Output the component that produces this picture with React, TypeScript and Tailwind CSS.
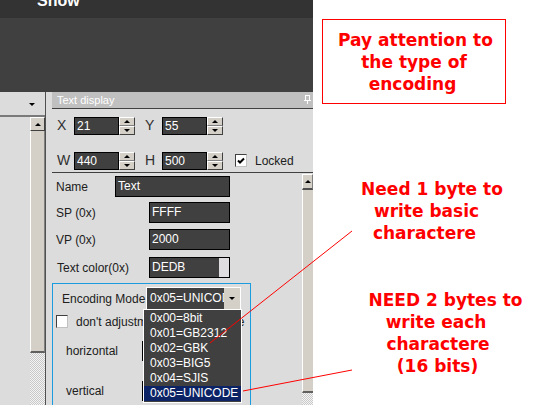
import React from 'react';

function Tri({ up }: { up?: boolean }) {
    return up ? (
        <div className="w-0 h-0 border-x-[3px] border-x-transparent border-b-[3px] border-b-black" />
    ) : (
        <div className="w-0 h-0 border-x-[3px] border-x-transparent border-t-[3px] border-t-black" />
    );
}

function Spin() {
    return (
        <div className="flex flex-col w-[16px] h-[18px] shrink-0">
            <div className="h-[9px] flex items-center justify-center bg-[#d4d0c8] border border-t-white border-l-white border-r-[#404040] border-b-[#808080]">
                <Tri up />
            </div>
            <div className="h-[9px] flex items-center justify-center bg-[#d4d0c8] border border-t-white border-l-white border-r-[#404040] border-b-[#404040]">
                <Tri />
            </div>
        </div>
    );
}

function NumField({ label, value }: { label: string; value: string }) {
    return (
        <div className="flex items-center">
            <span className="w-[17px] text-[14px] text-[#303030]">{label}</span>
            <div className="w-[45px] h-[18px] bg-[#404040] border border-black text-white text-[12px] leading-[16px] pl-[2px]">
                {value}
            </div>
            <Spin />
        </div>
    );
}

function Field({ label, value, labelW, inputW, swatch }: { label: string; value: string; labelW: string; inputW: string; swatch?: boolean }) {
    return (
        <div className="flex items-center h-[21px]">
            <span className={`${labelW} text-[12px] text-[#202020]`}>{label}</span>
            <div className={`${inputW} h-[21px] bg-[#404040] border border-black flex`}>
                <span className="flex-1 text-white text-[12px] leading-[19px] pl-[2px]">{value}</span>
                {swatch && <span className="w-[10px] bg-[#e0dde0]" />}
            </div>
        </div>
    );
}

const encodings = ['0x00=8bit', '0x01=GB2312', '0x02=GBK', '0x03=BIG5', '0x04=SJIS', '0x05=UNICODE'];

export default function App() {
    return (
        <div className="relative w-[536px] h-[405px] overflow-hidden bg-white flex font-['Liberation_Sans',Arial,sans-serif]">
            {/* App window */}
            <div className="w-[313px] h-full flex flex-col shrink-0">
                <div className="h-[18px] bg-[#333333] overflow-hidden pl-[37px]">
                    <div className="-mt-[7px] text-white font-bold text-[16px] leading-[16px]">Show</div>
                </div>
                <div className="h-[74px] bg-[#404040]" />

                <div className="flex-1 flex bg-[#dcdcdc] min-h-0">
                    {/* Left panel */}
                    <div className="w-[46px] flex flex-col border-r border-[#505050]">
                        <div className="h-[23px] flex items-center justify-end pr-[10px] pt-[2px]">
                            <Tri />
                        </div>
                        <div className="flex-1 flex border-t-2 border-[#7a7a7a] min-h-0">
                            <div className="flex-1" />
                            <div className="w-[15px] flex flex-col">
                                <div className="h-[14px] flex items-center justify-center bg-[#d4d0c8] border border-t-white border-l-white border-r-[#404040] border-b-[#404040]">
                                    <Tri up />
                                </div>
                                <div className="h-[222px] bg-[#d4d0c8] border-l border-l-white border-r border-r-[#808080] border-b-2 border-b-[#606060]" />
                                <div className="flex-1 bg-[repeating-conic-gradient(#c8c8c8_0_25%,#f4f4f4_0_50%)] bg-[length:2px_2px]" />
                            </div>
                        </div>
                    </div>
                    <div className="w-[6px]" />

                    {/* Text display panel */}
                    <div className="flex-1 flex flex-col min-w-0">
                        <div className="h-[17px] bg-[#c0c0c0] border-b border-[#404040] flex items-center justify-between pl-[5px] pr-[2px]">
                            <span className="text-white text-[11px]">Text display</span>
                            <svg width="7" height="9" viewBox="0 0 7 9" className="mb-[1px]">
                                <rect x="1.5" y="0.5" width="4" height="5" fill="none" stroke="white" />
                                <line x1="0" y1="5.5" x2="7" y2="5.5" stroke="white" />
                                <line x1="3.5" y1="6" x2="3.5" y2="9" stroke="white" />
                            </svg>
                        </div>

                        <div className="pl-[5px] pt-[6px] pb-[1px] border-b border-[#404040] flex flex-col gap-[14px]">
                            <div className="flex items-center gap-[10px]">
                                <NumField label="X" value="21" />
                                <NumField label="Y" value="55" />
                            </div>
                            <div className="flex items-center">
                                <NumField label="W" value="440" />
                                <div className="w-[10px]" />
                                <NumField label="H" value="500" />
                                <div className="ml-[12px] w-[12px] h-[13px] bg-white border border-t-[#404040] border-l-[#404040] border-r-[#c0c0c0] border-b-[#c0c0c0] flex items-center justify-center">
                                    <svg width="8" height="8" viewBox="0 0 8 8">
                                        <path d="M1 3.5 L3 5.5 L7 1.5" fill="none" stroke="black" strokeWidth="2" />
                                    </svg>
                                </div>
                                <span className="ml-[8px] text-[12px] text-[#202020]">Locked</span>
                            </div>
                        </div>

                        <div className="flex-1 flex min-h-0">
                            <div className="flex-1 flex flex-col">
                                <div className="pl-[4px] mt-[3px]">
                                    <Field label="Name" value="Text" labelW="w-[59px]" inputW="w-[115px]" />
                                </div>
                                <div className="pl-[4px] mt-[5px]">
                                    <Field label="SP (0x)" value="FFFF" labelW="w-[93px]" inputW="w-[81px]" />
                                </div>
                                <div className="pl-[4px] mt-[6px]">
                                    <Field label="VP (0x)" value="2000" labelW="w-[93px]" inputW="w-[81px]" />
                                </div>
                                <div className="pl-[5px] mt-[7px]">
                                    <Field label="Text color(0x)" value="DEDB" labelW="w-[92px]" inputW="w-[81px]" swatch />
                                </div>

                                {/* Encoding group */}
                                <div className="mt-[5px] w-[199px] flex-1 border-t border-x border-[#1c9ce0] flex flex-col">
                                    <div className="flex items-center pl-[9px] pt-[3px]">
                                        <span className="w-[84px] text-[12px] text-[#202020] whitespace-nowrap overflow-hidden">Encoding Mode</span>
                                        <div className="relative w-[95px] h-[23px] border border-white flex">
                                            <span className="flex-1 bg-[#404040] text-white text-[12px] leading-[21px] pl-[3px] overflow-hidden whitespace-nowrap">0x05=UNICODE</span>
                                            <span className="w-[16px] bg-[#d4d0c8] flex items-center justify-center">
                                                <Tri />
                                            </span>
                                            {/* open list */}
                                            <div className="absolute top-[21px] left-[-4px] w-[99px] z-10 bg-[#404040] border border-white py-[1px]">
                                                {encodings.map((e, i) => (
                                                    <div
                                                        key={e}
                                                        className={`h-[15px] leading-[15px] pl-[6px] text-white text-[12px] whitespace-nowrap ${i === 5 ? 'bg-[#0c2466]' : ''}`}
                                                    >
                                                        {e}
                                                    </div>
                                                ))}
                                            </div>
                                        </div>
                                    </div>
                                    <div className="flex items-center pl-[3px] mt-[5px] h-[13px]">
                                        <div className="w-[12px] h-[13px] bg-white border border-t-[#404040] border-l-[#404040] border-r-[#c0c0c0] border-b-[#c0c0c0]" />
                                        <span className="ml-[8px] text-[12px] text-[#202020] whitespace-nowrap">don't adjustment of the text size</span>
                                    </div>
                                    <div className="flex items-center pl-[13px] mt-[13px]">
                                        <span className="w-[76px] text-[12px] text-[#202020]">horizontal</span>
                                        <div className="w-[88px] h-[20px] bg-[#404040] border border-black" />
                                    </div>
                                    <div className="flex items-center pl-[13px] mt-[20px]">
                                        <span className="w-[76px] text-[12px] text-[#202020]">vertical</span>
                                        <div className="w-[88px] h-[20px] bg-[#404040] border border-black" />
                                    </div>
                                </div>
                            </div>

                            {/* right scrollbar */}
                            <div className="w-[11px] flex flex-col">
                                <div className="h-[16px] mt-[1px] flex items-center justify-center bg-[#d4d0c8] border border-t-white border-l-white border-r-[#808080] border-b-2 border-b-[#505050]">
                                    <Tri up />
                                </div>
                                <div className="h-[203px] bg-[#d4d0c8] border-l border-l-white border-b-2 border-b-[#606060]" />
                                <div className="flex-1 bg-[repeating-conic-gradient(#c8c8c8_0_25%,#f4f4f4_0_50%)] bg-[length:2px_2px]" />
                            </div>
                        </div>
                    </div>
                </div>
            </div>

            {/* Annotations */}
            <div className="flex-1 flex flex-col text-[#ff0000] font-['DejaVu_Sans',Verdana,sans-serif] font-bold text-[17px] leading-[22px] text-center">
                <div className="mt-[19px] ml-[9px] w-[184px] h-[85px] border border-[#ff0000] pt-[9px]">
                    <div className="pl-[3px]">Pay attention to</div>
                    <div>the type of</div>
                    <div className="pr-[3px]">encoding</div>
                </div>
                <div className="mt-[74px]">
                    <div className="pl-[15px]">Need 1 byte to</div>
                    <div className="pl-[4px]">write basic</div>
                    <div>charactere</div>
                </div>
                <div className="mt-[45px]">
                    <div className="pl-[42px]">NEED 2 bytes to</div>
                    <div className="pl-[23px]">write each</div>
                    <div className="pl-[27px]">charactere</div>
                    <div className="pl-[26px]">(16 bits)</div>
                </div>
            </div>

            {/* pointer lines */}
            <svg className="absolute inset-0 pointer-events-none z-20" width="536" height="405" viewBox="0 0 536 405">
                <line x1="210" y1="343" x2="352" y2="231" stroke="#ff0000" strokeWidth="1" />
                <line x1="243" y1="391" x2="352" y2="370" stroke="#ff0000" strokeWidth="1" />
            </svg>
        </div>
    );
}
